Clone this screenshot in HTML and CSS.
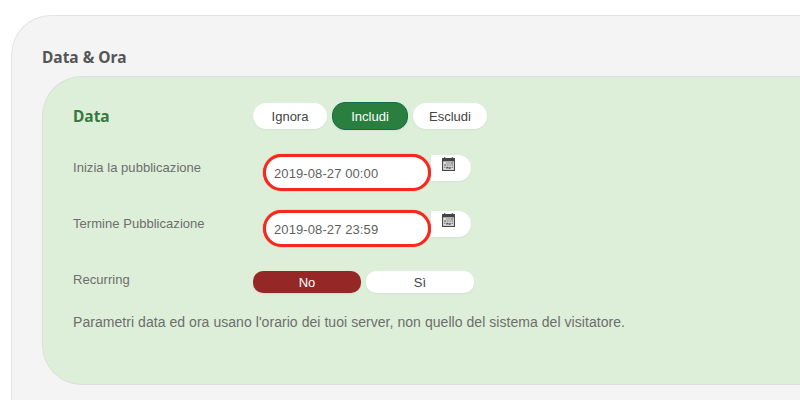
FILE: index.html
```html
<!DOCTYPE html>
<html lang="en">
<head>
    <meta charset="UTF-8">
    <title>Data &amp; Ora</title>
    <link rel="stylesheet" href="styles.css">
</head>
<body>
    <div class="panel">
        <h3 class="panel-title">Data &amp; Ora</h3>
        <div class="well">
            <div class="row row-head">
                <h4 class="well-title">Data</h4>
                <div class="pills">
                    <button class="pill">Ignora</button>
                    <button class="pill pill-on">Includi</button>
                    <button class="pill">Escludi</button>
                </div>
            </div>

            <div class="row row-date">
                <label class="field-label">Inizia la pubblicazione</label>
                <div class="date-field">
                    <input class="date-input" type="text" value="2019-08-27 00:00">
                    <button class="cal-btn">
                        <svg class="cal-icon" viewBox="0 0 12 13"><path d="M0 1h2V0h1v1h6V0h1v1h2v12H0z" fill="#444"/><path d="M1 4h10v8H1z" fill="#ddd"/><path d="M4 5h1v1H4zM6 5h1v1H6zM8 5h2v1H8zM2 7h2v1H2zM5 7h1v1H5zM7 7h1v1H7zM9 7h1v1H9zM2 9h1v1H2zM4 9h2v1H4zM7 9h1v1H7zM9 9h1v1H9zM4 11h1v-1H4zM6 11h2v-1H6z" fill="#444"/></svg>
                    </button>
                </div>
            </div>

            <div class="row row-date">
                <label class="field-label">Termine Pubblicazione</label>
                <div class="date-field">
                    <input class="date-input" type="text" value="2019-08-27 23:59">
                    <button class="cal-btn">
                        <svg class="cal-icon" viewBox="0 0 12 13"><path d="M0 1h2V0h1v1h6V0h1v1h2v12H0z" fill="#444"/><path d="M1 4h10v8H1z" fill="#ddd"/><path d="M4 5h1v1H4zM6 5h1v1H6zM8 5h2v1H8zM2 7h2v1H2zM5 7h1v1H5zM7 7h1v1H7zM9 7h1v1H9zM2 9h1v1H2zM4 9h2v1H4zM7 9h1v1H7zM9 9h1v1H9zM4 11h1v-1H4zM6 11h2v-1H6z" fill="#444"/></svg>
                    </button>
                </div>
            </div>

            <div class="row row-recurring">
                <label class="field-label">Recurring</label>
                <div class="switch">
                    <button class="switch-btn switch-no">No</button>
                    <button class="switch-btn">Sì</button>
                </div>
            </div>

            <p class="note">Parametri data ed ora usano l'orario dei tuoi server, non quello del sistema del visitatore.</p>
        </div>
    </div>
</body>
</html>
```

FILE: styles.css
```css
html, body {
    margin: 0;
    height: 400px;
    overflow: hidden;
    background: #fff;
}
body {
    font-family: "Liberation Sans", Arial, sans-serif;
    padding: 15px 0 0 11px;
    box-sizing: border-box;
}
button {
    font-family: inherit;
    cursor: pointer;
}
.panel {
    width: 789px;
    height: 385px;
    padding: 32px 0 0 30px;
    box-sizing: border-box;
    background: #f4f4f4;
    border: 1px solid #e3e3e3;
    border-right: 0;
    border-bottom: 0;
    border-radius: 40px 0 0 0;
}
.panel-title {
    margin: 0 0 9px;
    font-family: "Noto Sans", sans-serif;
    font-size: 15.5px;
    line-height: 19px;
    font-weight: 700;
    color: #555;
}
.well {
    width: 758px;
    height: 309px;
    padding: 26px 0 0 30px;
    box-sizing: border-box;
    background: #deefd9;
    border: 1px solid #dcdfd9;
    border-right: 0;
    border-radius: 40px 0 0 40px;
}
.row {
    display: grid;
    grid-template-columns: 180px 1fr;
}
.row-head {
    align-items: center;
    margin-bottom: 24px;
}
.well-title {
    margin: 0 0 2px;
    font-family: "Noto Sans", sans-serif;
    font-size: 15.5px;
    font-weight: 700;
    color: #35793f;
}
.pills {
    display: flex;
    gap: 5px;
}
.pill {
    height: 26px;
    width: 74px;
    padding: 0;
    border: 0;
    border-radius: 13px;
    background: #fff;
    font-size: 13px;
    color: #444;
    box-shadow: 0 1px 2px rgba(0, 0, 0, 0.06);
}
.pill-on {
    width: 76px;
    height: 28px;
    margin-top: -1px;
    background: #2a7f3e;
    border: 1px solid #126b52;
    color: #fff;
}
.field-label {
    font-size: 13px;
    line-height: 15px;
    letter-spacing: 0.04px;
    color: #6d6d6d;
}
.row-date {
    margin-bottom: 19px;
}
.row-date .field-label {
    margin-top: 6px;
}
.date-field {
    display: flex;
    align-items: flex-start;
    padding-left: 10px;
}
.date-input {
    width: 168px;
    height: 37px;
    padding: 2px 0 0 8px;
    box-sizing: border-box;
    border: 3px solid #f5291f;
    border-radius: 19px;
    background: #fff;
    box-shadow: 0 0 1px #f5291f;
    font-family: inherit;
    font-size: 13px;
    letter-spacing: 0.1px;
    color: #5f5f5f;
    outline: none;
}
.cal-btn {
    width: 40px;
    height: 26px;
    margin-top: 1px;
    padding: 0 0 8px 6px;
    border: 0;
    border-radius: 0 13px 13px 0;
    background: #fff;
    box-shadow: 0 1px 2px rgba(0, 0, 0, 0.06);
}
.cal-icon {
    display: block;
    width: 13px;
    height: 14px;
    margin: 0 auto 0 5px;
}
.row-recurring {
    margin-top: 24px;
}
.row-recurring .field-label {
    margin-top: 1px;
}
.switch {
    display: flex;
    gap: 5px;
}
.switch-btn {
    width: 108px;
    height: 22px;
    padding: 0;
    border: 0;
    border-radius: 10px;
    background: #fff;
    font-size: 13px;
    color: #444;
    box-shadow: 0 1px 2px rgba(0, 0, 0, 0.06);
}
.switch-no {
    background: #952726;
    color: #fff;
}
.note {
    margin: 21px 0 0;
    font-size: 14px;
    line-height: 16px;
    letter-spacing: 0.05px;
    color: #6d6d6d;
}
```
